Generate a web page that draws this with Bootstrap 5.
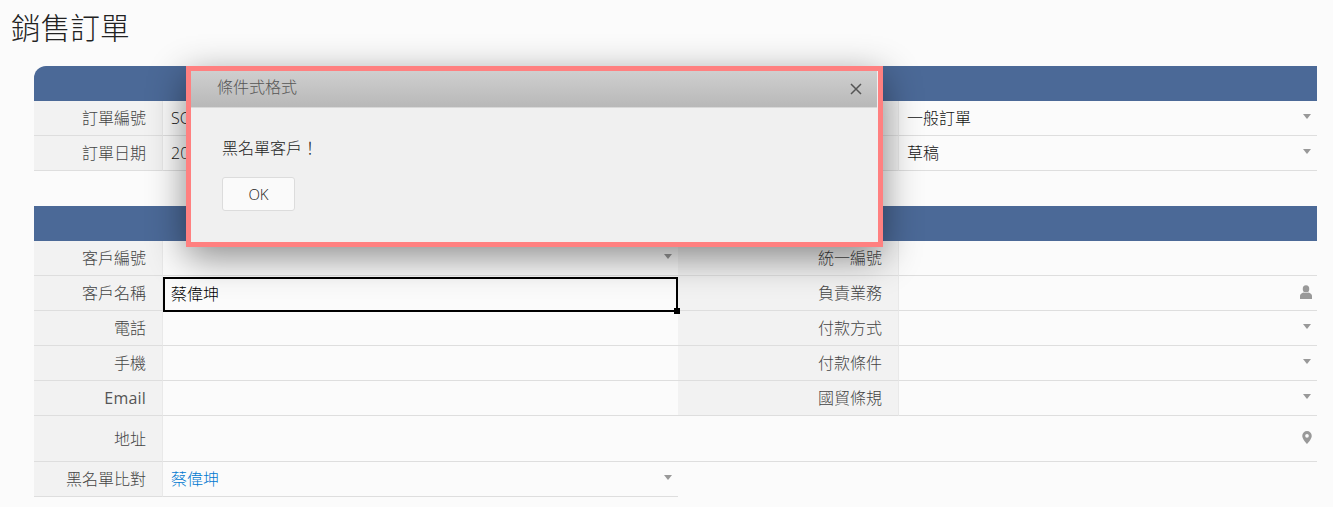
<!DOCTYPE html>
<html lang="zh-Hant">
<head>
<meta charset="utf-8">
<title>銷售訂單</title>
<link href="https://cdn.jsdelivr.net/npm/bootstrap@5.3.0/dist/css/bootstrap.min.css" rel="stylesheet">
<style>
html,body{height:507px;overflow:hidden}
body{background:#fbfbfb;font-family:"Open Sans","Noto Sans CJK TC",sans-serif;font-size:16px;font-weight:300;letter-spacing:0;color:#222;position:relative}
.pg-title{font-size:29.7px;font-weight:300;line-height:40px;margin:0;padding:8px 0 0 11px;height:66px;color:#222}
.sheet{margin:0 16px 0 34px}
.band{height:35px;background:#4b6997}
.band-first{border-top-left-radius:12px}
.form-grid{display:grid;grid-template-columns:129px 515px 221px 418px}
.form-gap{height:35px}
.lab,.val{height:35px;border-bottom:1px solid #dedede;line-height:35px;white-space:nowrap;overflow:hidden}
.lab{background:#f2f2f2;color:#444;text-align:right;padding-right:16px;border-right:1px solid #e9e9e9}
.latin-lab{letter-spacing:.2px;font-weight:400;color:#555}
.val{padding:0 8px;position:relative;display:flex;justify-content:space-between;align-items:center;color:#111}
.tall{height:46px;line-height:46px}
.span-3{grid-column:2 / 5}
.active-cell{border:2px solid #000;height:35px;margin-top:1px;padding-left:6px;overflow:visible;color:#000;margin-bottom:-1px}
.grip{position:absolute;right:-4px;bottom:-4px;width:6px;height:6px;background:#000}
.caret-mark{width:0;height:0;border-left:4px solid transparent;border-right:4px solid transparent;border-top:5px solid #999;margin:-4px -2px 0 0;flex:none}
.glyph{flex:none;margin-right:-3px}
.glyph-person{margin-top:-3px}
.glyph-pin{margin-top:-3px}
.link-val{color:#0078d0}
.alert-box{position:absolute;left:186px;top:66px;width:697px;height:181px;border:5px solid #ff8080;border-radius:0;background:#f0f0f0;box-shadow:0 10px 35px rgba(0,0,0,.45)}
.alert-head{height:37px;background:linear-gradient(#cfcfcf,#b8b8b8);border:0;border-radius:0;padding:0 0 4px 26px;margin-right:1px;border-bottom:1px solid #d8d8d8}
.alert-title{font-size:16px;font-weight:300;color:#555;line-height:1;margin:0}
.alert-x{margin-right:14px;margin-top:3px;width:14px;height:14px;flex:none}
.alert-body{padding:29px 31px 0;color:#222;line-height:22px}
.ok-btn{display:block;width:73px;height:34px;margin-top:18px;padding:0;background:#fafafa;border:1px solid #dcdcdc;border-radius:3px;color:#222;font-size:15px;font-weight:300}
</style>
</head>
<body>
<h1 class="pg-title">銷售訂單</h1>
<div class="sheet">
  <div class="band band-first"></div>
  <div class="form-grid">
    <div class="lab">訂單編號</div><div class="val">SO</div>
    <div class="lab"></div><div class="val">一般訂單<span class="caret-mark"></span></div>
    <div class="lab">訂單日期</div><div class="val">20</div>
    <div class="lab"></div><div class="val">草稿<span class="caret-mark"></span></div>
  </div>
  <div class="form-gap"></div>
  <div class="band"></div>
  <div class="form-grid">
    <div class="lab">客戶編號</div><div class="val"><span></span><span class="caret-mark"></span></div>
    <div class="lab">統一編號</div><div class="val"></div>
    <div class="lab">客戶名稱</div><div class="val active-cell">蔡偉坤<span class="grip"></span></div>
    <div class="lab">負責業務</div><div class="val"><span></span><svg class="glyph glyph-person" width="12" height="14" viewBox="0 0 14 15" preserveAspectRatio="none"><circle cx="7" cy="4.2" r="3.8" fill="#999"/><path d="M0 15v-3.4C0 9.4 3 8.4 4.6 8.1c1.4.8 3.4.8 4.8 0C11 8.4 14 9.4 14 11.6V15z" fill="#999"/></svg></div>
    <div class="lab">電話</div><div class="val"></div>
    <div class="lab">付款方式</div><div class="val"><span></span><span class="caret-mark"></span></div>
    <div class="lab">手機</div><div class="val"></div>
    <div class="lab">付款條件</div><div class="val"><span></span><span class="caret-mark"></span></div>
    <div class="lab latin-lab">Email</div><div class="val"></div>
    <div class="lab">國貿條規</div><div class="val"><span></span><span class="caret-mark"></span></div>
    <div class="lab tall">地址</div><div class="val tall span-3"><span></span><svg class="glyph glyph-pin" width="10" height="13" viewBox="0 0 12 15" preserveAspectRatio="none"><path fill-rule="evenodd" d="M6 0a5.7 5.7 0 0 0-5.7 5.7C.3 9.2 6 15 6 15s5.7-5.8 5.7-9.3A5.7 5.7 0 0 0 6 0zm0 3.4a2.2 2.2 0 1 1 0 4.4 2.2 2.2 0 0 1 0-4.4z" fill="#999"/></svg></div>
    <div class="lab">黑名單比對</div><div class="val"><span class="link-val">蔡偉坤</span><span class="caret-mark"></span></div>
  </div>
</div>
<div class="alert-box modal-content" role="dialog">
  <div class="alert-head modal-header">
    <h5 class="alert-title modal-title">條件式格式</h5>
    <svg class="alert-x" viewBox="0 0 14 14"><path d="M2 2l10 10M12 2L2 12" stroke="#555" stroke-width="1.5" fill="none"/></svg>
  </div>
  <div class="alert-body">黑名單客戶！
    <button type="button" class="btn ok-btn">OK</button>
  </div>
</div>
<script src="https://cdn.jsdelivr.net/npm/bootstrap@5.3.0/dist/js/bootstrap.bundle.min.js"></script>
</body>
</html>
